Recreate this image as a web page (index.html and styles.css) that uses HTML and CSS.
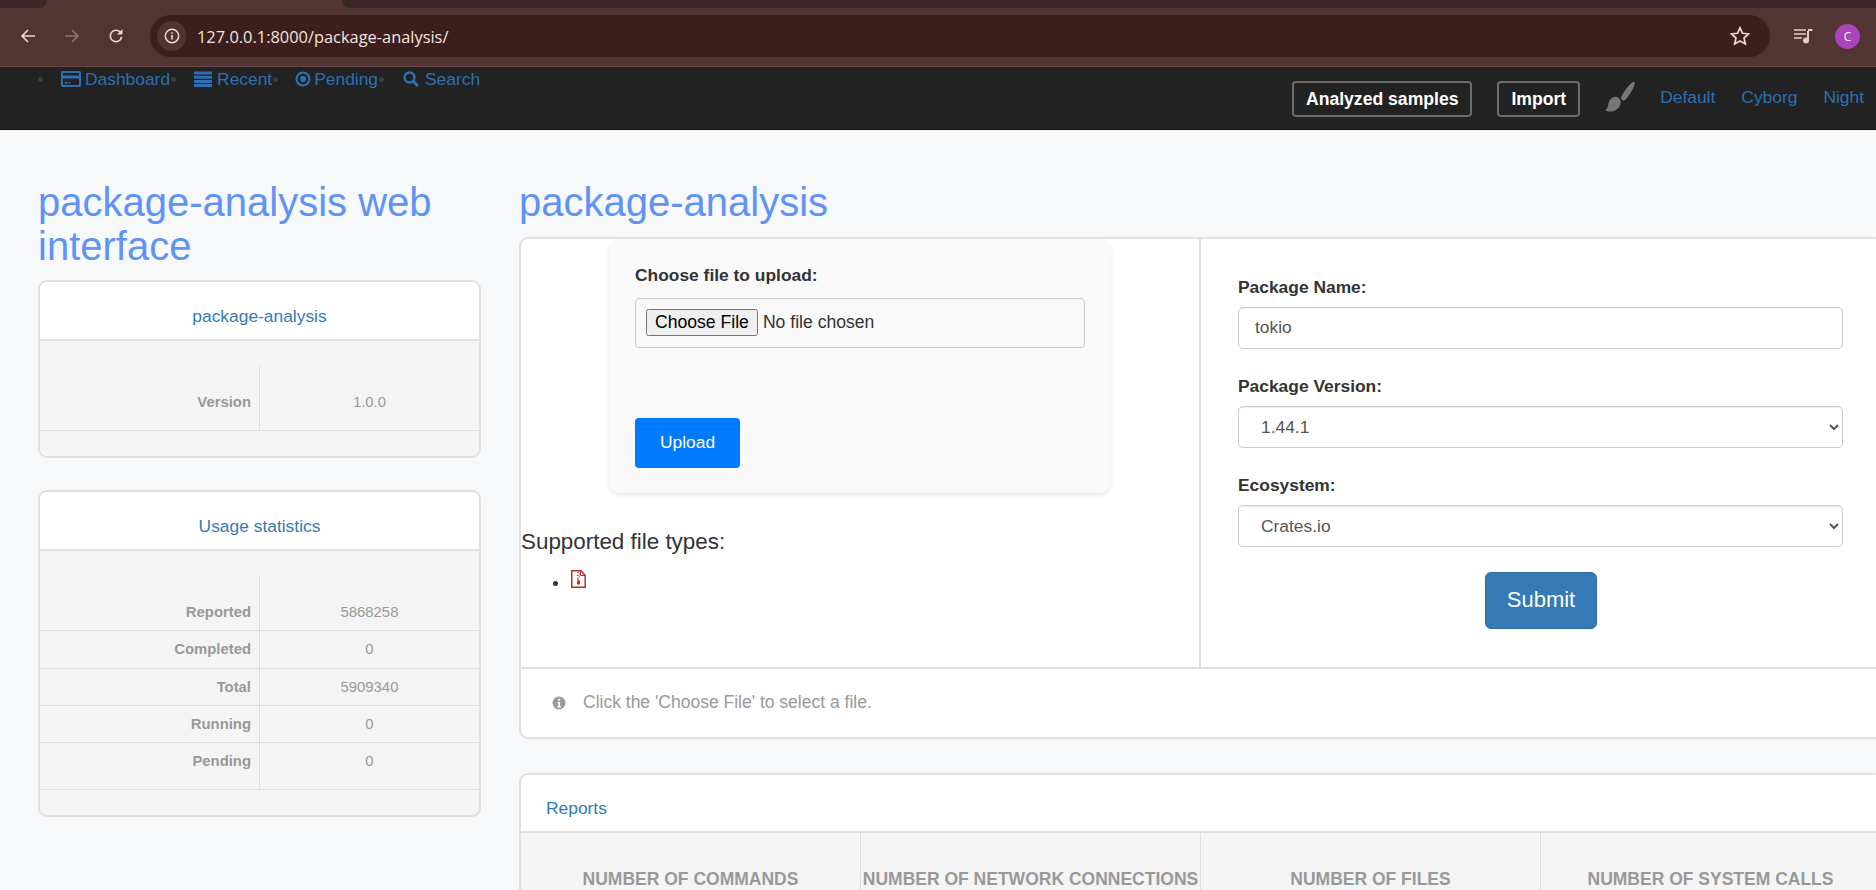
FILE: index.html
```html
<!DOCTYPE html>
<html lang="en">
<head>
  <meta charset="UTF-8">
  <meta name="viewport" content="width=device-width, initial-scale=1.0">
  <title>package-analysis</title>
  <link rel="stylesheet" href="styles.css">
</head>
<body>
  <!-- Browser toolbar -->
  <div class="chrome">
    <div class="tabstrip">
      <div class="tab-edge left"></div>
      <div class="tab"></div>
      <div class="tab-edge right"></div>
    </div>
    <div class="toolbar">
      <svg class="tool-icon" viewBox="0 0 16 16"><path d="M15 8H2M8 2 2 8l6 6" fill="none" stroke="#f0d9d4" stroke-width="1.6"/></svg>
      <svg class="tool-icon dim" viewBox="0 0 16 16"><path d="M1 8h13M8 2l6 6-6 6" fill="none" stroke="#8f736f" stroke-width="1.6"/></svg>
      <svg class="tool-icon" viewBox="0 0 16 16"><path d="M13.6 8.8A5.7 5.7 0 1 1 12 3.9" fill="none" stroke="#f0d9d4" stroke-width="1.6"/><path d="M14.4 1v5.4H9z" fill="#f0d9d4"/></svg>
      <div class="omnibox">
        <div class="site-info">
          <svg viewBox="0 0 16 16" width="16" height="16"><circle cx="8" cy="8" r="6.7" fill="none" stroke="#f3e3df" stroke-width="1.4"/><path d="M8 7v4.6M8 4.2v1.6" stroke="#f3e3df" stroke-width="1.5"/></svg>
        </div>
        <span class="url">127.0.0.1:8000/package-analysis/</span>
        <svg class="star" viewBox="0 0 20 20"><path d="m10 1.8 2.5 5.5 6 .7-4.5 4 1.3 5.9-5.3-3-5.3 3L6 12 1.500 8l6-.7z" fill="none" stroke="#f0d9d4" stroke-width="1.7"/></svg>
      </div>
      <svg class="queue" viewBox="0 0 19 16"><path d="M0 2h12M0 6h12M0 10h8" stroke="#e9c9c3" stroke-width="1.7"/><path d="M14 3v9" stroke="#e9c9c3" stroke-width="2"/><path d="M14 2h4.500" stroke="#e9c9c3" stroke-width="2"/><circle cx="12" cy="12.500" r="3" fill="#e9c9c3"/></svg>
      <div class="avatar">C</div>
    </div>
  </div>

  <!-- Navigation -->
  <nav class="navbar">
    <ul class="nav-links">
      <li><a href="#"><svg class="nav-icon" viewBox="0 0 20 18"><path d="M1.500 1h17A1.500 1.500 0 0 1 20 2.500v13a1.500 1.500 0 0 1-1.500 1.500h-17A1.500 1.500 0 0 1 0 15.500v-13A1.500 1.500 0 0 1 1.500 1zM2 3v2.500h16V3zM2 8.500V15h16V8.500zM3.500 12h3v1.500h-3zM7.500 12h2v1.500h-2z" fill="#2d6fb3" fill-rule="evenodd"/></svg>Dashboard</a></li>
      <li><a href="#"><svg class="nav-icon" viewBox="0 0 20 18"><path d="M1 1.500h18v3H1zM1 5.700h18v3H1zM1 9.900h18v3H1zM1 14h18v3H1z" fill="#2d6fb3"/></svg>Recent</a></li>
      <li><a href="#"><svg class="nav-icon round" viewBox="0 0 16 16"><circle cx="8" cy="8" r="6.500" fill="none" stroke="#2d6fb3" stroke-width="2.200"/><circle cx="8" cy="8" r="3" fill="#2d6fb3"/></svg>Pending</a></li>
      <li><a href="#"><svg class="nav-icon round search" viewBox="0 0 16 16"><circle cx="6.500" cy="6.500" r="5" fill="none" stroke="#2d6fb3" stroke-width="2.400"/><path d="m10 10 5 5" stroke="#2d6fb3" stroke-width="3"/></svg>Search</a></li>
    </ul>
    <div class="nav-right">
      <a class="nav-btn" href="#">Analyzed samples</a>
      <a class="nav-btn" href="#">Import</a>
      <svg class="brush" viewBox="0 0 30 31"><path d="M29 1c1 .6 1 1.500.4 3.200-2 5-5.500 10.500-8.900 14.500-1 1-2.200 1-3.300.2-1-.8-1.600-2-1-3.100C18.500 11.500 23 5 27 1.500c.8-.6 1.400-.8 2-.5z" fill="#777"/><path d="M9 16c3-.9 6 1.100 6.600 4.100.7 4-2 8.400-6.800 9.900-3 .9-6.500.7-8.800-.8 2.500-1 2.800-3 3.300-6C3.800 20 5.500 17 9 16z" fill="#777"/></svg>
      <a class="theme-link" href="#">Default</a>
      <a class="theme-link" href="#">Cyborg</a>
      <a class="theme-link" href="#">Night</a>
    </div>
  </nav>

  <div class="content">
    <!-- Left column -->
    <aside class="sidebar">
      <h1>package-analysis web interface</h1>

      <section class="card">
        <h3 class="card-title center">package-analysis</h3>
        <div class="card-body">
          <table class="info-table">
            <tr><th>Version</th><td>1.0.0</td></tr>
          </table>
        </div>
        <div class="card-foot"></div>
      </section>

      <section class="card">
        <h3 class="card-title center">Usage statistics</h3>
        <div class="card-body">
          <table class="info-table">
            <tr><th>Reported</th><td>5868258</td></tr>
            <tr><th>Completed</th><td>0</td></tr>
            <tr><th>Total</th><td>5909340</td></tr>
            <tr><th>Running</th><td>0</td></tr>
            <tr><th>Pending</th><td>0</td></tr>
          </table>
        </div>
        <div class="card-foot"></div>
      </section>
    </aside>

    <!-- Main column -->
    <main class="main">
      <h2>package-analysis</h2>

      <section class="panel">
        <div class="panel-columns">
          <div class="upload-col">
            <form class="upload-box">
              <label class="field-label" for="file">Choose file to upload:</label>
              <div class="file-wrap"><input type="file" id="file"></div>
              <button class="btn-upload" type="button">Upload</button>
            </form>
            <h4 class="types-title">Supported file types:</h4>
            <ul class="types">
              <li>
                <svg viewBox="0 0 15 18" width="15" height="18"><path d="M.8.8h9l4.400 4.400v12H.8z" fill="#fff" stroke="#b5302e" stroke-width="1.500"/><path d="M9.500 1v4.500H14" fill="none" stroke="#b5302e" stroke-width="1"/><path d="M6 2h1.500v1H6zM7.500 3.500H9v1H7.500zM6 5h1.500v1H6zM7.500 6.500H9v1H7.500zM6 8h1.500v1H6zM6.700 9.500h1.600l.9 3.500a1.700 1.700 0 1 1-3.400 0z" fill="#b5302e"/></svg>
              </li>
            </ul>
          </div>
          <form class="package-col">
            <label class="field-label" for="name">Package Name:</label>
            <input class="control" type="text" id="name" value="tokio">
            <label class="field-label" for="version">Package Version:</label>
            <select class="control" id="version"><option>1.44.1</option></select>
            <label class="field-label" for="eco">Ecosystem:</label>
            <select class="control" id="eco"><option>Crates.io</option></select>
            <button class="btn-submit" type="button">Submit</button>
          </form>
        </div>
        <div class="panel-foot">
          <svg viewBox="0 0 14 14" width="14" height="14"><circle cx="7" cy="7" r="6.500" fill="#999"/><path d="M5.500 6h2.600v4.200h1v1.300H5.300v-1.300h1V7.300h-.8zM6.200 2.700h1.900v2H6.200z" fill="#fff"/></svg>
          <span>Click the 'Choose File' to select a file.</span>
        </div>
      </section>

      <section class="panel reports">
        <h3 class="card-title">Reports</h3>
        <div class="stats">
          <div class="stat">Number of commands</div>
          <div class="stat">Number of network connections</div>
          <div class="stat">Number of files</div>
          <div class="stat">Number of system calls</div>
        </div>
      </section>
    </main>
  </div>
</body>
</html>
```

FILE: styles.css
```css
/* General */
html, body {
  height: 890px;
  overflow: hidden;
}

body {
  margin: 0;
  font-family: "Liberation Sans", Arial, sans-serif;
  font-size: 17.4px;
  background-color: #f7f8fa;
  color: #333;
}

/* Browser toolbar */
.chrome {
  height: 67px;
  background-color: #523432;
}

.tabstrip {
  display: flex;
  height: 8px;
}

.tab-edge {
  background-color: #3b2727;
}

.tab-edge.left {
  width: 47px;
  border-bottom-right-radius: 8px;
}

.tab-edge.right {
  flex: 1;
  border-bottom-left-radius: 8px;
}

.tab {
  width: 295px;
}

.toolbar {
  display: flex;
  align-items: center;
  height: 59px;
  box-sizing: border-box;
  padding: 0 16px 2px 20px;
  border-bottom: 1px solid #6b4a47;
}

.tool-icon {
  width: 16px;
  height: 16px;
  margin-right: 28px;
}

.omnibox {
  display: flex;
  align-items: center;
  width: 1620px;
  height: 42px;
  margin-left: -2px;
  padding: 0 20px 0 7px;
  box-sizing: border-box;
  border-radius: 21px;
  background-color: #3c1f1c;
}

.site-info {
  display: flex;
  align-items: center;
  justify-content: center;
  width: 29px;
  height: 30px;
  border-radius: 15px;
  background-color: #54322e;
}

.url {
  margin-left: 11px;
  font-family: "Open Sans", sans-serif;
  font-size: 16.4px;
  color: #f3e3df;
}

.star {
  width: 20px;
  height: 20px;
  margin-left: auto;
}

.queue {
  width: 19px;
  height: 16px;
  margin-left: 24px;
}

.avatar {
  display: flex;
  align-items: center;
  justify-content: center;
  width: 25px;
  height: 25px;
  margin-left: 22px;
  border-radius: 50%;
  background-color: #a945b8;
  color: #fff;
  font-family: "Open Sans", sans-serif;
  font-size: 12px;
}

/* Navigation */
.navbar {
  display: flex;
  justify-content: space-between;
  height: 63px;
  box-sizing: border-box;
  background-color: #222;
  border-bottom: 1px solid #0e0e0e;
}

.navbar a {
  text-decoration: none;
  color: #2d6fb3;
}

.nav-links {
  display: flex;
  margin: 0;
  padding: 0 0 0 38px;
  list-style: none;
}

.nav-links li {
  display: flex;
  height: 24px;
  align-items: center;
}

.nav-links li::before {
  content: "";
  width: 5px;
  height: 5px;
  margin-right: 18px;
  border-radius: 50%;
  background-color: #3e3e3e;
}

.nav-links li:nth-child(2)::before { margin-right: 17px; }
.nav-links li:nth-child(3)::before { margin-right: 17px; }
.nav-links li:nth-child(4)::before { margin-right: 19px; }

.nav-links a {
  display: flex;
  align-items: center;
  margin-right: 1px;
  font-size: 17.4px;
}

.nav-icon {
  width: 20px;
  height: 18px;
  margin-right: 4px;
}

.nav-icon.round {
  width: 16px;
  height: 16px;
  margin-right: 3px;
}

.nav-icon.search {
  margin-right: 6px;
}

.nav-right {
  display: flex;
  align-items: flex-start;
  padding: 14px 12px 0 0;
}

.nav-btn {
  padding: 6px 12px;
  line-height: 20px;
  margin-right: 25px;
  border: 2px solid #6b6b6b;
  border-radius: 4px;
  font-size: 17.6px;
  font-weight: bold;
}

.navbar a.nav-btn {
  color: #fff;
  height: 20px;
}

.brush {
  width: 30px;
  height: 31px;
  margin-right: 25px;
}

.theme-link {
  margin-right: 26px;
  line-height: 32px;
  font-size: 17.4px;
}

.theme-link:last-child {
  margin-right: 0;
}

/* Columns */
.content {
  display: flex;
  align-items: flex-start;
  gap: 38px;
  width: 1860px;
  padding: 51px 0 0 38px;
}

.sidebar {
  flex: 0 0 443px;
}

h1, h2 {
  margin: 0;
  font-size: 40px;
  font-weight: normal;
  line-height: 43.5px;
  color: #5f93f5;
}

h1 {
  width: 420px;
  margin-bottom: 12px;
}

h2 {
  margin-bottom: 12px;
}

/* Left cards */
.card {
  margin-bottom: 32px;
  border: 2px solid #e0e0e0;
  border-radius: 9px;
  background-color: #f4f4f4;
  overflow: hidden;
}

.card-title {
  margin: 0;
  padding: 23px 24px 12px;
  line-height: 22px;
  font-size: 17.4px;
  font-weight: normal;
  color: #337ab7;
  background-color: #fff;
  border-bottom: 2px solid #e0e0e0;
}

.card-title.center {
  text-align: center;
}

.card-body {
  padding-top: 25px;
}

.card-foot {
  height: 25px;
  border-top: 1px solid #ddd;
}

.info-table {
  width: 100%;
  table-layout: fixed;
  border-collapse: collapse;
  font-size: 14.85px;
  line-height: 18.2px;
  color: #999;
}

.info-table th {
  width: 203px;
  padding: 9px 8px;
  text-align: right;
  border-right: 1px solid #ddd;
}

.info-table td {
  padding: 9px 8px;
  text-align: center;
  font-weight: normal;
}

.info-table tr + tr th,
.info-table tr + tr td {
  border-top: 1px solid #ddd;
}

.info-table tr:first-child th,
.info-table tr:first-child td {
  padding-top: 27px;
}

.info-table tr:last-child th,
.info-table tr:last-child td {
  padding-bottom: 19px;
}

/* Main panels */
.main {
  flex: 0 0 1364px;
}

.panel {
  margin-bottom: 34px;
  border: 2px solid #e0e0e0;
  border-radius: 9px;
  background-color: #fff;
  overflow: hidden;
}

.panel-columns {
  display: flex;
  height: 428px;
  border-bottom: 2px solid #e0e0e0;
}

.upload-col {
  flex: 0 0 678px;
  border-right: 2px solid #e0e0e0;
}

.upload-box {
  width: 450px;
  height: 229px;
  margin-left: 88px;
  padding: 25px 25px 0 26px;
  border-radius: 10px;
  background-color: #f9f9f9;
  box-shadow: 0 2px 5px rgba(0, 0, 0, 0.1);
}

.field-label {
  display: block;
  line-height: 22px;
  font-weight: bold;
}

.file-wrap {
  display: flex;
  align-items: center;
  height: 48px;
  margin-top: 12px;
  padding: 0 10px;
  border: 1px solid #ccc;
  border-radius: 4px;
}

.file-wrap input {
  font-family: "Liberation Sans", Arial, sans-serif;
  font-size: 17.6px;
}

.file-wrap input::file-selector-button {
  padding: 1px 7px;
  margin-right: 5px;
}

.btn-upload {
  display: block;
  width: 105px;
  height: 50px;
  margin-top: 70px;
  border: 0;
  border-radius: 4px;
  background-color: #007bff;
  color: #fff;
  font-family: inherit;
  font-size: 17.4px;
}

.types-title {
  margin: 36px 0 0;
  line-height: 26px;
  font-size: 22.4px;
  font-weight: normal;
}

.types {
  margin: 15px 0 0;
  padding-left: 49px;
  line-height: 22px;
}

.types svg {
  margin-left: 1px;
}

.package-col {
  flex: 1;
  padding: 37px 0 0 37px;
}

.package-col .field-label {
  margin: 0 0 9px;
}

.control {
  display: block;
  width: 605px;
  height: 42px;
  margin-bottom: 26px;
  padding: 0 18px;
  box-sizing: border-box;
  border: 1px solid #ccc;
  border-radius: 5px;
  background-color: #fff;
  box-shadow: inset 0 1px 1px rgba(0, 0, 0, 0.075);
  color: #555;
  font-family: inherit;
  font-size: 17.4px;
}

input.control {
  padding: 0 16px;
}

.btn-submit {
  display: block;
  width: 112px;
  height: 57px;
  margin: -1px 0 0 247px;
  border: 1px solid #2e6da4;
  border-radius: 6px;
  background-color: #337ab7;
  color: #fff;
  font-family: inherit;
  font-size: 22px;
}

.panel-foot {
  display: flex;
  align-items: center;
  height: 68px;
  padding-left: 31px;
  color: #999;
  font-size: 17.5px;
}

.panel-foot span {
  margin-left: 17px;
}

/* Reports */
.reports .card-title {
  padding: 22px 25px 12px;
}

.stats {
  display: grid;
  grid-template-columns: repeat(4, 340px);
  background-color: #f4f4f4;
  height: 100px;
}

.stat {
  padding-top: 36px;
  text-align: center;
  text-transform: uppercase;
  white-space: nowrap;
  font-size: 17.5px;
  font-weight: bold;
  color: #999;
  border-right: 1px solid #ddd;
}
```
